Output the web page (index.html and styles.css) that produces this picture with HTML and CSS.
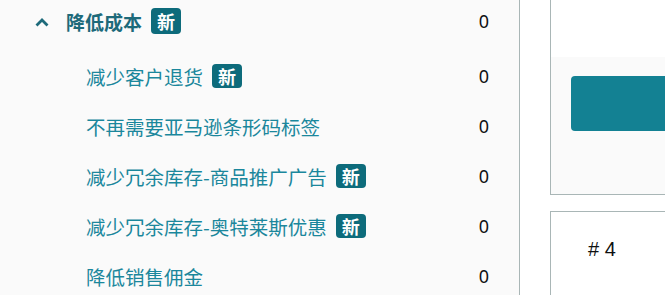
FILE: index.html
```html
<!DOCTYPE html>
<html lang="zh">
<head>
<meta charset="utf-8">
<link rel="stylesheet" href="styles.css">
</head>
<body>
<div class="page">
  <aside class="side">
    <div class="row head">
      <span class="chev">
        <svg width="14" height="10" viewBox="0 0 14 10"><polyline points="1.5,8.5 7,3 12.5,8.5" fill="none" stroke="#1d6a7a" stroke-width="2.8"/></svg>
      </span>
      <span class="label">降低成本</span><span class="badge big">新</span>
      <span class="count">0</span>
    </div>
    <div class="row sub"><span class="label">减少客户退货</span><span class="badge">新</span><span class="count">0</span></div>
    <div class="row sub"><span class="label">不再需要亚马逊条形码标签</span><span class="count">0</span></div>
    <div class="row sub"><span class="label">减少冗余库存-商品推广广告</span><span class="badge">新</span><span class="count">0</span></div>
    <div class="row sub"><span class="label">减少冗余库存-奥特莱斯优惠</span><span class="badge">新</span><span class="count">0</span></div>
    <div class="row sub"><span class="label">降低销售佣金</span><span class="count">0</span></div>
  </aside>
  <main class="main">
    <section class="card first">
      <div class="card-head"></div>
      <div class="card-body"><div class="btn"></div></div>
    </section>
    <section class="card second">
      <div class="num"># 4</div>
    </section>
  </main>
</div>
</body>
</html>
```
FILE: styles.css
```css
html, body { margin: 0; padding: 0; background: #fff; }
body { font-family: "Noto Sans CJK SC", "Noto Sans", sans-serif; overflow: hidden; }
.page { display: flex; width: 665px; height: 295px; overflow: hidden; }
.side {
  width: 519px; flex: none; background: #fafafa;
  border-right: 1px solid #a9b6b6; box-sizing: content-box;
}
.row { display: flex; align-items: center; padding-right: 30px; }
.head { height: 42px; padding-left: 35px; }
.chev { width: 31px; display: flex; align-items: center; margin-top: 1px; }
.head .label { font-size: 19px; font-weight: 700; color: #1d6a7a; }
.sub { height: 50px; padding-left: 86px; }
.head + .sub { margin-top: 9px; }
.sub .label { font-size: 19.5px; color: #1b879c; }
.badge {
  margin-left: 9px; width: 30px; height: 24px; border-radius: 4px;
  background: #0d6b7b; color: #fff; font-size: 18px; font-weight: 700;
  display: flex; align-items: center; justify-content: center; line-height: 1;
}
.badge.big { height: 26px; }
.count { margin-left: auto; font-family: "Noto Sans", sans-serif; font-size: 18px; color: #0f1111; }
.main { flex: 1; padding-left: 30px; min-width: 0; }
.card { border: 1px solid #a9b6b6; border-right: none; width: 200px; }
.first { border-top: none; height: 194px; display: flex; flex-direction: column; }
.card-head { height: 57px; background: #fff; }
.card-body { flex: 1; background: #fafafa; padding: 19px 0 0 20px; }
.btn { height: 55px; background: #138193; border-radius: 4px 0 0 4px; }
.second { margin-top: 16px; height: 100px; border-bottom: none; }
.num { font-family: "Liberation Sans", Arial, sans-serif; font-size: 20px; color: #0f1111; padding: 26px 0 0 37px; }
```
